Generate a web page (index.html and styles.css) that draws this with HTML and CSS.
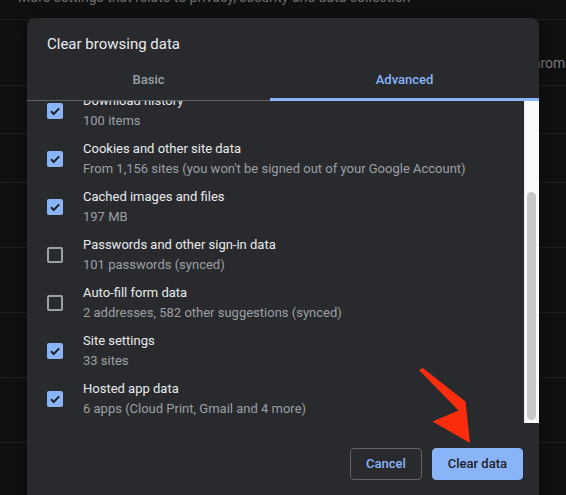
FILE: index.html
```html
<!DOCTYPE html>
<html lang="en">
<head>
<meta charset="utf-8">
<title>Clear browsing data</title>
<link rel="stylesheet" href="styles.css">
</head>
<body>
<div class="page">
  <div class="gutter"></div>
  <div class="card">
    <div class="bg-row bg-first"><span class="bg-top-text">More settings that relate to privacy, security and data collection</span></div>
    <div class="bg-row bg-second"><span class="bg-side-text">Google Chrome</span></div>
    <div class="bg-row h48"></div>
    <div class="bg-row h49"></div>
    <div class="bg-row h65"></div>
    <div class="bg-row h65"></div>
    <div class="bg-row h65"></div>
    <div class="bg-row h65"></div>
  </div>
</div>

<div class="dialog">
  <div class="dialog-title">Clear browsing data</div>
  <div class="tabs">
    <div class="tab">Basic</div>
    <div class="tab active">Advanced</div>
  </div>
  <div class="scroll-area">
    <div class="list">
      <div class="list-inner">
        <div class="row">
          <span class="checkbox checked"><svg viewBox="0 0 16 16" width="16" height="16"><path d="M4 8.3 L6.7 11 L12.2 5.4" fill="none" stroke="#202124" stroke-width="2"/></svg></span>
          <div class="row-text"><div class="label">Download history</div><div class="sub">100 items</div></div>
        </div>
        <div class="row">
          <span class="checkbox checked"><svg viewBox="0 0 16 16" width="16" height="16"><path d="M4 8.3 L6.7 11 L12.2 5.4" fill="none" stroke="#202124" stroke-width="2"/></svg></span>
          <div class="row-text"><div class="label">Cookies and other site data</div><div class="sub">From 1,156 sites (you won't be signed out of your Google Account)</div></div>
        </div>
        <div class="row">
          <span class="checkbox checked"><svg viewBox="0 0 16 16" width="16" height="16"><path d="M4 8.3 L6.7 11 L12.2 5.4" fill="none" stroke="#202124" stroke-width="2"/></svg></span>
          <div class="row-text"><div class="label">Cached images and files</div><div class="sub">197 MB</div></div>
        </div>
        <div class="row">
          <span class="checkbox"></span>
          <div class="row-text"><div class="label">Passwords and other sign-in data</div><div class="sub">101 passwords (synced)</div></div>
        </div>
        <div class="row">
          <span class="checkbox"></span>
          <div class="row-text"><div class="label">Auto-fill form data</div><div class="sub">2 addresses, 582 other suggestions (synced)</div></div>
        </div>
        <div class="row">
          <span class="checkbox checked"><svg viewBox="0 0 16 16" width="16" height="16"><path d="M4 8.3 L6.7 11 L12.2 5.4" fill="none" stroke="#202124" stroke-width="2"/></svg></span>
          <div class="row-text"><div class="label">Site settings</div><div class="sub">33 sites</div></div>
        </div>
        <div class="row">
          <span class="checkbox checked"><svg viewBox="0 0 16 16" width="16" height="16"><path d="M4 8.3 L6.7 11 L12.2 5.4" fill="none" stroke="#202124" stroke-width="2"/></svg></span>
          <div class="row-text"><div class="label">Hosted app data</div><div class="sub">6 apps (Cloud Print, Gmail and 4 more)</div></div>
        </div>
      </div>
    </div>
    <div class="scrollbar"><div class="thumb"></div></div>
  </div>
  <div class="footer">
    <button class="btn btn-cancel">Cancel</button>
    <button class="btn btn-primary">Clear data</button>
  </div>
</div>

<svg class="arrow" width="566" height="495" viewBox="0 0 566 495">
  <polygon points="419,370 422.7,368 465.5,401.5 470,443 432.5,421.5 458.5,410.5" fill="#fc2d0c"/>
</svg>
</body>
</html>
```

FILE: styles.css
```css
* { box-sizing: border-box; }

html, body {
  margin: 0;
  padding: 0;
}

body {
  width: 566px;
  height: 495px;
  overflow: hidden;
  background: #0a0a0a;
  font-family: Roboto, "Liberation Sans", Arial, sans-serif;
  position: relative;
}

.page {
  display: flex;
  height: 495px;
}

.gutter {
  width: 12px;
  background: #0a0a0a;
}

.card {
  flex: 1;
  background: #0f1010;
  display: flex;
  flex-direction: column;
}

.bg-row {
  border-bottom: 1px solid #1f2020;
  flex: none;
}

.bg-first {
  height: 20px;
  padding-left: 18px;
}

.bg-top-text {
  display: block;
  margin-top: -13px;
  font-size: 14px;
  line-height: 20px;
  color: #6b6e72;
  white-space: nowrap;
}

.bg-second {
  height: 66px;
  padding-left: 515px;
  padding-top: 33px;
}

.bg-side-text {
  display: block;
  font-size: 14px;
  line-height: 20px;
  color: #74777b;
  white-space: nowrap;
  margin-left: -39px;
}

.h48 { height: 48px; }
.h49 { height: 49px; }
.h65 { height: 65px; }

.dialog {
  position: absolute;
  left: 27px;
  top: 18px;
  width: 512px;
  height: 500px;
  background: #292a2d;
  border-radius: 8px 8px 0 0;
  display: flex;
  flex-direction: column;
  box-shadow: 0 4px 12px rgba(0, 0, 0, 0.4);
}

.dialog-title {
  padding: 16px 20px 6px;
  font-size: 15px;
  line-height: 20px;
  color: #e8eaed;
}

.tabs {
  display: flex;
  border-bottom: 1px solid #5f6368;
  height: 41px;
  flex: none;
}

.tab {
  height: 40px;
  display: flex;
  align-items: center;
  justify-content: center;
  font-size: 13px;
  font-weight: 500;
  color: #9aa0a6;
  border-bottom: 2px solid transparent;
}

.tab:first-child {
  width: 243px;
}

.tab.active {
  flex: 1;
  color: #8ab4f8;
  height: 41px;
  border-bottom: 3px solid #8ab4f8;
  margin-bottom: -1px;
}

.scroll-area {
  display: flex;
  height: 322px;
  flex: none;
}

.list {
  flex: 1;
  overflow: hidden;
}

.list-inner {
  margin-top: -14px;
}

.row {
  height: 48px;
  display: flex;
  align-items: center;
  padding-left: 20px;
}

.checkbox {
  width: 16px;
  height: 16px;
  border: 2px solid #9aa0a6;
  border-radius: 2px;
  flex: none;
  margin-right: 20px;
  display: block;
}

.checkbox.checked {
  border: none;
  background: #8ab4f8;
}

.checkbox svg {
  display: block;
}

.label {
  font-size: 13px;
  line-height: 20px;
  color: #e8eaed;
}

.sub {
  font-size: 13px;
  line-height: 20px;
  color: #9aa0a6;
}

.scrollbar {
  width: 15px;
  background: #f9f9f9;
  border-left: 1px solid #ececec;
  padding-top: 91px;
  padding-left: 2px;
}

.thumb {
  width: 9px;
  height: 228px;
  background: #c8c8c8;
  border-radius: 5px;
}

.footer {
  display: flex;
  justify-content: flex-end;
  gap: 10px;
  padding: 25px 16px 0 0;
}

.btn {
  height: 32px;
  padding: 0 15px;
  border-radius: 4px;
  font-family: Roboto, "Liberation Sans", Arial, sans-serif;
  font-size: 13px;
  font-weight: 500;
  line-height: 30px;
}

.btn-cancel {
  background: transparent;
  border: 1px solid #5f6368;
  color: #8ab4f8;
}

.btn-primary {
  background: #8ab4f8;
  border: 1px solid #8ab4f8;
  color: #202124;
  padding: 0 15px;
}

.arrow {
  position: absolute;
  left: 0;
  top: 0;
  pointer-events: none;
}
```
